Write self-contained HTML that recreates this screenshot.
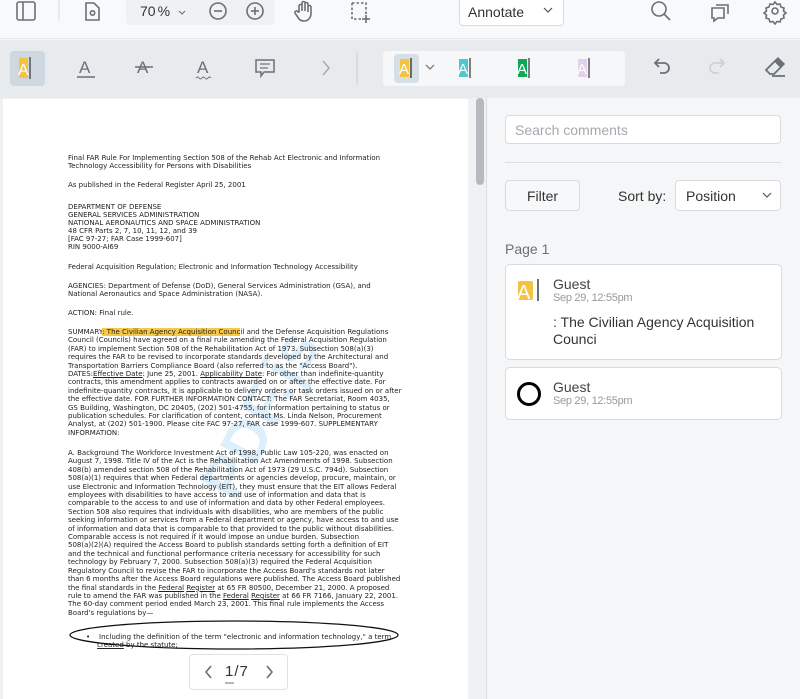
<!DOCTYPE html>
<html><head><meta charset="utf-8">
<style>
*{margin:0;padding:0;box-sizing:border-box}
body{width:800px;height:699px;overflow:hidden;background:#f5f6f7;font-family:"Liberation Sans",sans-serif;position:relative}
.abs{position:absolute}
svg{position:absolute;overflow:visible}
.doc div{position:absolute;left:68px;white-space:pre;font-family:"DejaVu Sans",sans-serif;font-size:7px;color:#222;line-height:8.4px}
.hl{background:#f6c84a}
u{text-decoration:underline}
</style></head><body>
<!-- top bar -->
<div class="abs" style="left:0;top:0;width:800px;height:39px;background:#f8f9fa;border-bottom:1px solid #e6e8eb"></div>
<div class="abs" style="left:126px;top:0;width:149px;height:25px;background:#eff1f3;border-radius:0 0 4px 4px"></div>
<svg style="left:0;top:0" width="800" height="40" fill="none" stroke="#6b7077" stroke-width="1.6">
<rect x="17" y="2" width="18" height="18" rx="2"/><line x1="23" y1="2" x2="23" y2="20"/>
<line x1="59" y1="0" x2="59" y2="21" stroke="#ddd" stroke-width="1"/>
<path d="M86 3h8l5 5v12h-13z"/><circle cx="92.5" cy="13" r="2.2"/>
<polyline points="115,8 118,11 121,8" stroke-width="1.1" transform="translate(64,3)"/>
<circle cx="218" cy="11" r="8"/><line x1="214" y1="11" x2="222" y2="11"/>
<circle cx="255" cy="11" r="8"/><line x1="251" y1="11" x2="259" y2="11"/><line x1="255" y1="7" x2="255" y2="15"/>
<path d="M299 12V6a1.5 1.5 0 0 1 3 0v5V3a1.5 1.5 0 0 1 3 0v8V4a1.5 1.5 0 0 1 3 0v8V7a1.5 1.5 0 0 1 3 0v6c0 5-3 8-7 8s-5-2-7-5l-2-3a1.5 1.5 0 0 1 3-1z"/>
<path d="M352 3h14v12M352 3v16h10" stroke-dasharray="2.5 2"/><line x1="366" y1="15" x2="366" y2="23"/><line x1="362" y1="19" x2="370" y2="19"/>
<circle cx="659" cy="9" r="7"/><line x1="664" y1="14" x2="670" y2="20"/>
<path d="M712 8h12v10h-6l-4 3v-3h-2z"/><path d="M716 5h12v9"/>
<circle cx="775" cy="11" r="3"/><path d="M775 2l2 2.5 3-.5 1 3 3 1-.5 3 2.5 2-2.5 2 .5 3-3 1-1 3-3-.5-2 2.5-2-2.5-3 .5-1-3-3-1 .5-3-2.5-2 2.5-2-.5-3 3-1 1-3 3 .5z"/>
</svg>
<div class="abs" style="left:140px;top:3px;font-size:14px;color:#333">70<span style="margin-left:2px">%</span></div>
<div class="abs" style="left:459px;top:-2px;width:105px;height:28px;background:#fff;border:1px solid #d8dbe0;border-radius:0 0 4px 4px;font-size:14px;color:#333;padding:5px 0 0 8px">Annotate</div>
<svg style="left:543px;top:7px" width="10" height="8" fill="none" stroke="#555" stroke-width="1.2"><polyline points="1,1 5,5 9,1"/></svg>
<!-- second bar -->
<div class="abs" style="left:0;top:40px;width:800px;height:58px;background:#e8ebee"></div>
<div class="abs" style="left:10px;top:51px;width:35px;height:35px;background:#cfd8e1;border-radius:4px"></div>
<div class="abs" style="left:383px;top:51px;width:242px;height:35px;background:#f6f7f8;border-radius:4px"></div>
<div class="abs" style="left:394px;top:54px;width:25px;height:29px;background:#d6dee6;border-radius:4px"></div>
<svg style="left:0;top:40px" width="800" height="58" fill="none" stroke="#6b7077" stroke-width="1.5">
<rect x="19" y="18" width="9" height="20" fill="#f5c342" stroke="none"/><text x="18" y="35" font-size="16" fill="#fff" stroke="none" font-family="Liberation Sans">A</text><line x1="30" y1="17" x2="30" y2="39" stroke="#555"/>
<text x="79" y="33" font-size="17" fill="#6b7077" stroke="none" font-family="Liberation Sans">A</text><line x1="77" y1="37" x2="95" y2="37"/>
<text x="137" y="33" font-size="17" fill="#6b7077" stroke="none" font-family="Liberation Sans">A</text><line x1="135" y1="27" x2="153" y2="27"/>
<text x="197" y="33" font-size="17" fill="#6b7077" stroke="none" font-family="Liberation Sans">A</text><path d="M196 38q1.5-2 3 0t3 0 3 0 3 0 3 0" stroke-width="1"/>
<path d="M256 20h18v12h-10l-3 4v-4h-5z"/><line x1="260" y1="24" x2="270" y2="24" stroke-width="1.2"/><line x1="260" y1="28" x2="268" y2="28" stroke-width="1.2"/>
<polyline points="323,21 329,28 323,35" stroke="#a5aab0"/>
<line x1="357" y1="12" x2="357" y2="45" stroke="#ccc" stroke-width="1"/>
<rect x="400" y="19" width="9" height="18" fill="#f5c342" stroke="none"/><text x="399" y="34" font-size="15" fill="#fff" stroke="none">A</text><line x1="411" y1="18" x2="411" y2="38" stroke="#444"/>
<polyline points="426,25 430,29 434,25" stroke-width="1.2"/>
<rect x="459" y="19" width="9" height="18" fill="#4fc7cf" stroke="none"/><text x="458" y="34" font-size="15" fill="#fff" stroke="none">A</text><line x1="470" y1="18" x2="470" y2="38" stroke="#555"/>
<rect x="518" y="19" width="9" height="18" fill="#0fa956" stroke="none"/><text x="517" y="34" font-size="15" fill="#fff" stroke="none">A</text><line x1="529" y1="18" x2="529" y2="38" stroke="#555"/>
<rect x="578" y="19" width="9" height="18" fill="#e3d0ec" stroke="none"/><text x="577" y="34" font-size="15" fill="#fff" stroke="none">A</text><line x1="589" y1="18" x2="589" y2="38" stroke="#555"/>
<path d="M656 23h8a5 5 0 0 1 0 10h-4M659 19l-4 4 4 4" stroke-width="1.8"/>
<path d="M723 23h-8a5 5 0 0 0 0 10h4M720 19l4 4-4 4" stroke="#cdd1d5" stroke-width="1.8"/>
<path d="M766 30l9-9 6 6-7 7h-4z" stroke-width="1.8"/><path d="M775 21l3-3 6 6-3 3z" fill="#6b7077"/><line x1="772" y1="36" x2="785" y2="36" stroke-width="1.8"/>
</svg>
<!-- doc area -->
<div class="abs" style="left:0;top:98px;width:487px;height:601px;background:#f0f1f3"></div>
<div class="abs" style="left:3px;top:99px;width:465px;height:600px;background:#fff"></div>
<div class="abs" style="left:476px;top:98px;width:8px;height:87px;background:#b6babe;border-radius:4px"></div>
<div class="abs" style="left:486px;top:98px;width:1px;height:601px;background:#dcdfe2"></div>
<div class="abs" style="left:170px;top:380px;font-size:60px;font-weight:bold;color:rgba(100,180,235,.22);transform:rotate(-62deg);white-space:nowrap">PDF.js</div>
<div class="doc">
<div style="top:154px">Final FAR Rule For Implementing Section 508 of the Rehab Act Electronic and Information
Technology Accessibility for Persons with Disabilities</div>
<div style="top:181px">As published in the Federal Register April 25, 2001</div>
<div style="top:203px;line-height:8px">DEPARTMENT OF DEFENSE
GENERAL SERVICES ADMINISTRATION
NATIONAL AERONAUTICS AND SPACE ADMINISTRATION
48 CFR Parts 2, 7, 10, 11, 12, and 39
[FAC 97-27; FAR Case 1999-607]
RIN 9000-AI69</div>
<div style="top:263px">Federal Acquisition Regulation; Electronic and Information Technology Accessibility</div>
<div style="top:282px">AGENCIES: Department of Defense (DoD), General Services Administration (GSA), and
National Aeronautics and Space Administration (NASA).</div>
<div style="top:309px">ACTION: Final rule.</div>
<div style="top:328px">SUMMARY<span class="hl">: The Civilian Agency Acquisition Counc</span>il and the Defense Acquisition Regulations
Council (Councils) have agreed on a final rule amending the Federal Acquisition Regulation
(FAR) to implement Section 508 of the Rehabilitation Act of 1973. Subsection 508(a)(3)
requires the FAR to be revised to incorporate standards developed by the Architectural and
Transportation Barriers Compliance Board (also referred to as the "Access Board").
DATES:<u>Effective Date</u>: June 25, 2001. <u>Applicability Date</u>: For other than indefinite-quantity
contracts, this amendment applies to contracts awarded on or after the effective date. For
indefinite-quantity contracts, it is applicable to delivery orders or task orders issued on or after
the effective date. FOR FURTHER INFORMATION CONTACT: The FAR Secretariat, Room 4035,
GS Building, Washington, DC 20405, (202) 501-4755, for information pertaining to status or
publication schedules. For clarification of content, contact Ms. Linda Nelson, Procurement
Analyst, at (202) 501-1900. Please cite FAC 97-27, FAR case 1999-607. SUPPLEMENTARY
INFORMATION:</div>
<div style="top:449px">A. Background The Workforce Investment Act of 1998, Public Law 105-220, was enacted on
August 7, 1998. Title IV of the Act is the Rehabilitation Act Amendments of 1998. Subsection
408(b) amended section 508 of the Rehabilitation Act of 1973 (29 U.S.C. 794d). Subsection
508(a)(1) requires that when Federal departments or agencies develop, procure, maintain, or
use Electronic and Information Technology (EIT), they must ensure that the EIT allows Federal
employees with disabilities to have access to and use of information and data that is
comparable to the access to and use of information and data by other Federal employees.
Section 508 also requires that individuals with disabilities, who are members of the public
seeking information or services from a Federal department or agency, have access to and use
of information and data that is comparable to that provided to the public without disabilities.
Comparable access is not required if it would impose an undue burden. Subsection
508(a)(2)(A) required the Access Board to publish standards setting forth a definition of EIT
and the technical and functional performance criteria necessary for accessibility for such
technology by February 7, 2000. Subsection 508(a)(3) required the Federal Acquisition
Regulatory Council to revise the FAR to incorporate the Access Board's standards not later
than 6 months after the Access Board regulations were published. The Access Board published
the final standards in the <u>Federal</u> <u>Register</u> at 65 FR 80500, December 21, 2000. A proposed
rule to amend the FAR was published in the <u>Federal</u> <u>Register</u> at 66 FR 7166, January 22, 2001.
The 60-day comment period ended March 23, 2001. This final rule implements the Access
Board's regulations by—</div>
<div style="top:633px;left:86px">•    Including the definition of the term "electronic and information technology," a term
     <u>created</u> by the statute;</div>
</div>
<svg style="left:0;top:0" width="487" height="699" fill="none"><ellipse cx="234" cy="635" rx="164" ry="14" stroke="#111" stroke-width="1.3"/></svg>
<!-- pager -->
<div class="abs" style="left:189px;top:654px;width:99px;height:36px;background:#fff;border:1px solid #dfe2e5;border-radius:4px"></div>
<svg style="left:189px;top:654px" width="99" height="36" fill="none" stroke="#6b7077" stroke-width="1.6"><polyline points="22,12 17,18 22,24"/><polyline points="78,12 83,18 78,24"/><line x1="36" y1="29" x2="45" y2="29" stroke-width="1"/></svg>
<div class="abs" style="left:225px;top:663px;font-size:15px;color:#333">1<span style="margin:0 1px">/</span>7</div>
<!-- right panel -->
<div class="abs" style="left:505px;top:115px;width:276px;height:29px;background:#fff;border:1px solid #d8dbe0;border-radius:4px;font-size:14px;color:#a4a9af;padding:6px 0 0 9px">Search comments</div>
<div class="abs" style="left:505px;top:162px;width:276px;height:1px;background:#dcdfe2"></div>
<div class="abs" style="left:505px;top:180px;width:75px;height:31px;background:#f7f8f9;border:1px solid #d8dbe0;border-radius:4px;font-size:14px;color:#333;text-align:center;padding-top:7px">Filter</div>
<div class="abs" style="left:618px;top:188px;font-size:14px;color:#333">Sort by:</div>
<div class="abs" style="left:675px;top:180px;width:106px;height:31px;background:#fff;border:1px solid #d8dbe0;border-radius:4px;font-size:14px;color:#333;padding:7px 0 0 10px">Position</div>
<svg style="left:762px;top:192px" width="10" height="7" fill="none" stroke="#555" stroke-width="1.2"><polyline points="1,1 5,5 9,1"/></svg>
<div class="abs" style="left:505px;top:241px;font-size:14px;color:#6b7077">Page 1</div>
<div class="abs" style="left:505px;top:264px;width:277px;height:96px;background:#fff;border:1px solid #d8dbe0;border-radius:5px"></div>
<div class="abs" style="left:505px;top:367px;width:277px;height:53px;background:#fff;border:1px solid #d8dbe0;border-radius:5px"></div>
<svg style="left:505px;top:264px" width="60" height="160" fill="none">
<rect x="13" y="17" width="15" height="19" rx="2" fill="#f5c342"/><text x="12" y="35" font-size="20" fill="#fff" font-family="Liberation Sans">A</text><line x1="33" y1="15" x2="33" y2="37" stroke="#6b7077" stroke-width="2"/>
<circle cx="24" cy="130" r="10.5" stroke="#000" stroke-width="3"/>
</svg>
<div class="abs" style="left:553px;top:276px;font-size:14px;color:#444">Guest</div>
<div class="abs" style="left:553px;top:292px;font-size:11px;color:#999;letter-spacing:-0.3px">Sep 29, 12:55pm</div>
<div class="abs" style="left:553px;top:314px;width:215px;font-size:14px;color:#333;line-height:17px">: The Civilian Agency Acquisition Counci</div>
<div class="abs" style="left:553px;top:379px;font-size:14px;color:#444">Guest</div>
<div class="abs" style="left:553px;top:395px;font-size:11px;color:#999;letter-spacing:-0.3px">Sep 29, 12:55pm</div>
</body></html>
